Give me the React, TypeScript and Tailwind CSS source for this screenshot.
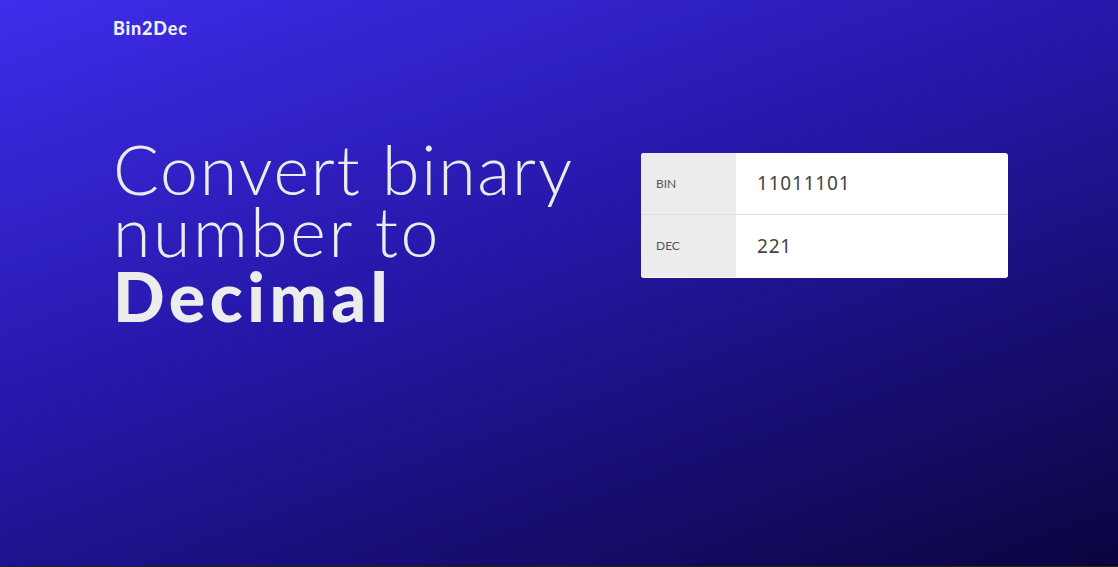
export default function App() {
  return (
    <div className="h-[567px] w-full overflow-hidden bg-[linear-gradient(160deg,#3f2deb_0%,#2517a6_45%,#0a053f_100%)] font-['Lato',sans-serif] text-[#ececec] border-b border-[#222]">
      {/* top nav */}
      <header className="px-[113px] pt-[15px]">
        <span className="text-[18px] font-black tracking-[0.8px] text-[#eeeeee]">Bin2Dec</span>
      </header>

      <main className="flex justify-between pl-[113px] pr-[110px] pt-[96px]">
        <h1 className="text-[68px] font-light tracking-[1.8px]">
          <span className="block leading-[62px]">Convert binary</span>
          <span className="block leading-[62px] tracking-[2.6px]">number to</span>
          <span className="block leading-[68px] font-black tracking-[4.5px]">Decimal</span>
        </h1>

        <div className="mt-[15px] w-[367px] h-[125px] overflow-hidden rounded-[3px] bg-white">
          <div className="flex h-[62px] border-b border-[#dddddd]">
            <div className="flex w-[95px] items-center bg-[#ececec] pl-[15px] text-[12px] text-[#555]">BIN</div>
            <div className="flex flex-1 items-center pl-[21px] text-[19px] tracking-[0.8px] text-[#444] font-['Noto_Sans',sans-serif]">
              11011101
            </div>
          </div>
          <div className="flex h-[62px]">
            <div className="flex w-[95px] items-center bg-[#ececec] pl-[15px] text-[12px] text-[#555]">DEC</div>
            <div className="flex flex-1 items-center pl-[21px] text-[19px] tracking-[0.8px] text-[#444] font-['Noto_Sans',sans-serif]">
              221
            </div>
          </div>
        </div>
      </main>
    </div>
  );
}
